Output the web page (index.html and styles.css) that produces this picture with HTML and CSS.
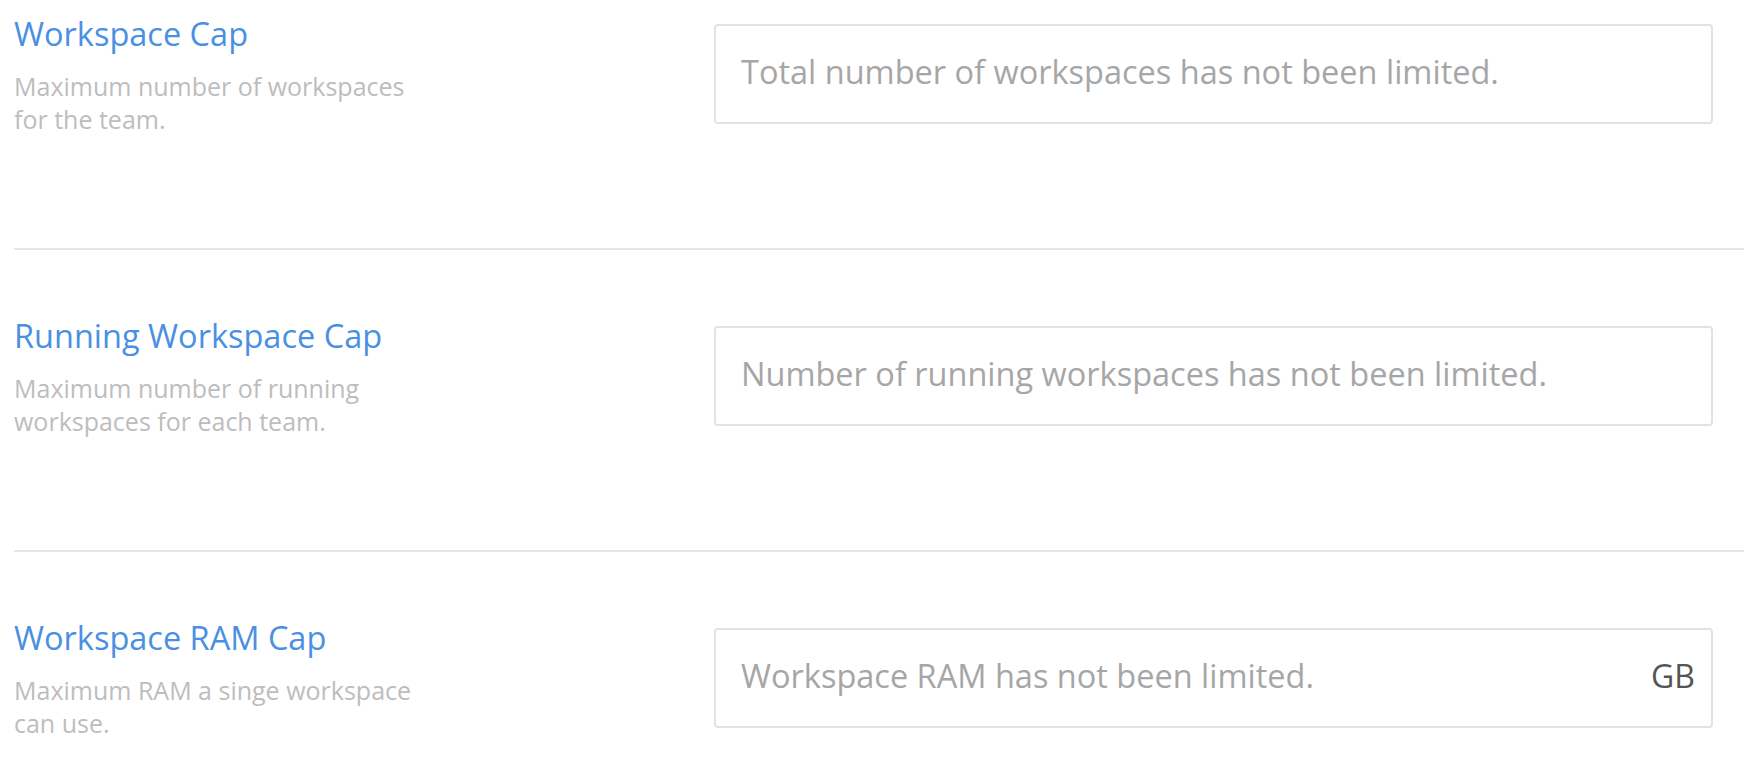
FILE: index.html
```html
<!DOCTYPE html>
<html lang="en">
<head>
<meta charset="utf-8">
<title>Workspace limits</title>
<link rel="stylesheet" href="styles.css">
</head>
<body>
<div class="settings">
  <section class="setting">
    <div class="label-col">
      <h3 class="title">Workspace Cap</h3>
      <p class="desc">Maximum number of workspaces for the team.</p>
    </div>
    <div class="field">
      <input class="field-input" type="text" placeholder="Total number of workspaces has not been limited.">
    </div>
  </section>
  <section class="setting">
    <div class="label-col">
      <h3 class="title">Running Workspace Cap</h3>
      <p class="desc">Maximum number of running workspaces for each team.</p>
    </div>
    <div class="field">
      <input class="field-input" type="text" placeholder="Number of running workspaces has not been limited.">
    </div>
  </section>
  <section class="setting">
    <div class="label-col">
      <h3 class="title">Workspace RAM Cap</h3>
      <p class="desc">Maximum RAM a singe workspace can use.</p>
    </div>
    <div class="field">
      <input class="field-input" type="text" placeholder="Workspace RAM has not been limited.">
      <span class="unit">GB</span>
    </div>
  </section>
</div>
</body>
</html>
```

FILE: styles.css
```css
html, body {
  margin: 0;
  padding: 0;
  background: #ffffff;
  overflow: hidden;
}

body {
  font-family: "Open Sans", "Noto Sans", sans-serif;
}

.settings {
  padding-left: 14px;
}

.setting {
  display: grid;
  grid-template-columns: 700px 999px;
  align-items: start;
  padding: 62px 0 112px;
  border-bottom: 2px solid #e6e6e6;
}

.setting:first-child {
  padding-top: 10px;
}

.label-col {
  max-width: 420px;
}

.title {
  margin: 2px 0 0;
  font-size: 32.5px;
  line-height: 44px;
  font-weight: 400;
  color: #4a90e2;
}

.desc {
  margin: 14px 0 0;
  font-size: 25px;
  line-height: 33px;
  color: #bdbdbd;
}

.field {
  margin-top: 14px;
  height: 100px;
  box-sizing: border-box;
  border: 2px solid #e3e3e3;
  border-radius: 4px;
  display: flex;
  align-items: center;
  padding: 0 16px 6px 25px;
}

.field-input {
  flex: 1;
  min-width: 0;
  border: 0;
  outline: none;
  padding: 0;
  background: transparent;
  font-family: "Open Sans", "Noto Sans", sans-serif;
  font-size: 32.5px;
  color: #555555;
}

.field-input::placeholder {
  color: #a6a6a6;
  opacity: 1;
}

.unit {
  font-size: 32px;
  color: #555555;
}
```
